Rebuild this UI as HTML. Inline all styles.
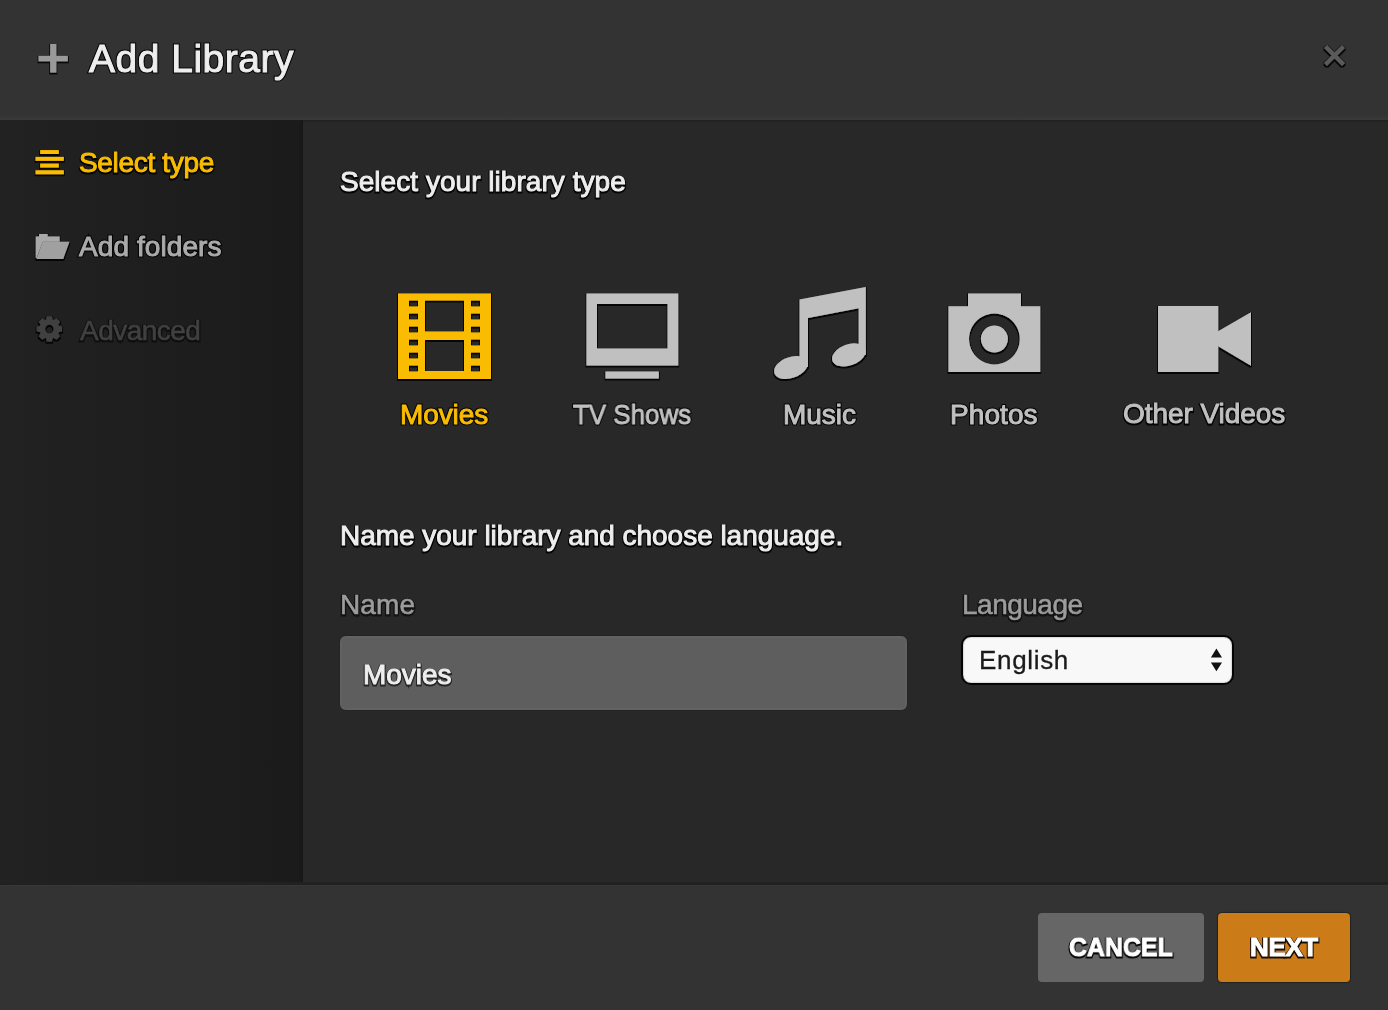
<!DOCTYPE html>
<html><head><meta charset="utf-8">
<style>
html,body{margin:0;padding:0;width:1388px;height:1010px;overflow:hidden;background:#282828;font-family:"Liberation Sans",sans-serif;}
.abs{position:absolute;}
#hdr{left:0;top:0;width:1388px;height:120px;background:#333;}
#hdrline{left:0;top:116px;width:1388px;height:4px;background:linear-gradient(#353535,#383838);}
#side{left:0;top:120px;width:303px;height:762px;background:linear-gradient(to right,#222 0%,#1e1e1e 50%,#1b1b1b 100%);}
#sideedge{left:299px;top:120px;width:4px;height:762px;background:linear-gradient(to right,#1a1a1a,#171717);}
#main{left:303px;top:120px;width:1085px;height:762px;background:#282828;}
#maintop{left:303px;top:120px;width:1085px;height:2px;background:#222;}
#band{left:0;top:882px;width:1388px;height:3px;background:#212121;}
#ftr{left:0;top:885px;width:1388px;height:125px;background:#333;border-top:1px solid #373737;}
.t{position:absolute;white-space:nowrap;line-height:1;-webkit-text-stroke:1px currentColor;will-change:transform;}
.sh{color:#000;-webkit-text-stroke:3.2px #000;filter:blur(0.6px);opacity:0.9}
.ns{-webkit-text-stroke:0.3px currentColor;}
</style></head>
<body>
<div id="hdr" class="abs"></div>
<div id="hdrline" class="abs"></div>
<div id="side" class="abs"></div>
<div id="sideedge" class="abs"></div>
<div id="main" class="abs"></div>
<div id="maintop" class="abs"></div>
<div id="band" class="abs"></div>
<div id="ftr" class="abs"></div>

<!-- input + select -->
<div class="abs" style="box-sizing:border-box;left:339.4px;top:635.2px;width:569px;height:75.8px;background:#5e5e5e;border:1.8px solid #232323;border-radius:7px;box-shadow:inset 0 0 1px 1.5px #646464"></div>
<div class="abs" style="left:961px;top:635px;width:269px;height:45.5px;background:#f8f8f8;border:2px solid #050505;border-radius:10px;box-shadow:inset 0 0 1.5px rgba(0,0,0,.6)"></div>

<!-- buttons -->
<div class="abs" style="left:1038px;top:913px;width:166px;height:69px;background:#666;border-radius:4px"></div>
<div class="abs" style="left:1218px;top:913px;width:132px;height:69px;background:#cc7b19;border-radius:4px;box-shadow:0 0 1px 1px rgba(0,0,0,.35)"></div>

<svg class="abs" style="left:0;top:0" width="1388" height="1010" viewBox="0 0 1388 1010">
 <defs>
  <filter id="sh" x="-20%" y="-20%" width="140%" height="140%">
   <feMorphology in="SourceAlpha" operator="dilate" radius="1.1" result="d"/>
   <feOffset in="d" dx="0" dy="0.5" result="o"/>
   <feFlood flood-color="#000" flood-opacity="0.85"/>
   <feComposite in2="o" operator="in" result="s"/>
   <feMerge><feMergeNode in="s"/><feMergeNode in="SourceGraphic"/></feMerge>
  </filter>
 </defs>
 <path filter="url(#sh)" fill="#f9bc00" fill-rule="evenodd" d="M398,293.5H491V379H398Z
  M409,300.5h9v6h-9Z M409,313.5h9v6h-9Z M409,326.5h9v6h-9Z M409,339.5h9v6h-9Z M409,352.5h9v6h-9Z M409,365.5h9v6h-9Z
  M471,300.5h9v6h-9Z M471,313.5h9v6h-9Z M471,326.5h9v6h-9Z M471,339.5h9v6h-9Z M471,352.5h9v6h-9Z M471,365.5h9v6h-9Z
  M425,300.5h39v31h-39Z M425,340h39v31h-39Z"/>
 <path filter="url(#sh)" fill="#c0c0c0" fill-rule="evenodd" d="M586.5,293.5H678.2V365.5H586.5Z M597,304H667.6V348.4H597Z M605.5,371.5H658.8V378.6H605.5Z"/>
 <g filter="url(#sh)" fill="#c0c0c0">
  <path d="M799.6,299.6L865.8,287.1V355H858.7V308.3L808,318V367H799.6Z"/>
  <ellipse cx="790.9" cy="367.5" rx="17.5" ry="10.5" transform="rotate(-20 790.9 367.5)"/>
  <ellipse cx="848.9" cy="354.9" rx="17.5" ry="10.5" transform="rotate(-20 848.9 354.9)"/>
 </g>
 <path filter="url(#sh)" fill="#c0c0c0" fill-rule="evenodd" d="M948.5,306.2H968V293.5H1021V306.2H1040.2V372H948.5Z
  M994.4,313.6a25.4,25.4 0 1,0 0.01,0Z M994.4,325.5a13.5,13.5 0 1,1 -0.01,0Z"/>
 <path filter="url(#sh)" fill="#c0c0c0" d="M1158,306H1218.2V331.2L1251,312.3V365.7L1218.2,346.3V372H1158Z"/>
 <g filter="url(#sh)" fill="#f9bc00">
  <rect x="40.2" y="150.1" width="18.6" height="3.9"/>
  <rect x="35.6" y="156.9" width="28.2" height="3.9"/>
  <rect x="40.2" y="163.6" width="18.6" height="3.9"/>
  <rect x="35.6" y="170.3" width="28.2" height="3.9"/>
 </g>
 <g filter="url(#sh)">
  <path fill="#a8a8a8" d="M35.8,258V236.6H39V233.9H47.6V236.6H59.6V241.7H42.7L36.5,258Z"/>
  <path fill="#a0a0a0" d="M42.7,241.7H69.4L63.2,258.9H36.5Z"/>
 </g>
 <path filter="url(#sh)" fill="#3f3f3f" fill-rule="evenodd" d="M46.04,319.79 L46.82,316.26 L51.98,316.26 L52.76,319.79 L53.53,320.11 L56.58,318.16 L60.24,321.82 L58.29,324.87 L58.61,325.64 L62.14,326.42 L62.14,331.58 L58.61,332.36 L58.29,333.13 L60.24,336.18 L56.58,339.84 L53.53,337.89 L52.76,338.21 L51.98,341.74 L46.82,341.74 L46.04,338.21 L45.27,337.89 L42.22,339.84 L38.56,336.18 L40.51,333.13 L40.19,332.36 L36.66,331.58 L36.66,326.42 L40.19,325.64 L40.51,324.87 L38.56,321.82 L42.22,318.16 L45.27,320.11Z M49.40,324.80 a4.2,4.2 0 1,0 0.01,0Z"/>
 <path filter="url(#sh)" d="M1325.5,46.5L1343.5,64.5M1343.5,46.5L1325.5,64.5" stroke="#5a5a5a" stroke-width="4.2"/>
 <g filter="url(#sh)" fill="#9a9a9a"><rect x="38.6" y="55.9" width="29.2" height="5.4"/><rect x="50.2" y="44" width="6.1" height="28.5"/></g>
 <path fill="#111" d="M1210.9,657.5L1216.4,648.6L1222,657.5Z M1210.9,662.4L1216.4,671.3L1222,662.4Z"/>
</svg>

<div class="t sh" style="left:89.0px;top:38.5px;font-size:39px;font-weight:400;letter-spacing:0.5px;margin-top:0.6px">Add Library</div><div class="t" style="left:89.0px;top:38.5px;font-size:39px;font-weight:400;letter-spacing:0.5px;color:#eeeeee">Add Library</div>
<div class="t sh" style="left:78.8px;top:149.4px;font-size:28px;font-weight:400;letter-spacing:-0.33px;margin-top:0.6px">Select type</div><div class="t" style="left:78.8px;top:149.4px;font-size:28px;font-weight:400;letter-spacing:-0.33px;color:#f9bc00">Select type</div>
<div class="t sh" style="left:79.2px;top:232.7px;font-size:28px;font-weight:400;letter-spacing:0.08px;margin-top:0.6px">Add folders</div><div class="t" style="left:79.2px;top:232.7px;font-size:28px;font-weight:400;letter-spacing:0.08px;color:#aaaaaa">Add folders</div>
<div class="t sh" style="left:79.8px;top:317.3px;font-size:28px;font-weight:400;letter-spacing:-0.53px;opacity:0.5;margin-top:0.6px">Advanced</div><div class="t" style="left:79.8px;top:317.3px;font-size:28px;font-weight:400;letter-spacing:-0.53px;-webkit-text-stroke:0.6px currentColor;color:#404040">Advanced</div>
<div class="t sh" style="left:340.0px;top:168.2px;font-size:28px;font-weight:400;letter-spacing:0.04px;margin-top:0.6px">Select your library type</div><div class="t" style="left:340.0px;top:168.2px;font-size:28px;font-weight:400;letter-spacing:0.04px;color:#eeeeee">Select your library type</div>
<div class="t sh" style="left:399.5px;top:400.5px;font-size:28px;font-weight:400;letter-spacing:-0.1px;margin-top:0.6px">Movies</div><div class="t" style="left:399.5px;top:400.5px;font-size:28px;font-weight:400;letter-spacing:-0.1px;color:#f9bc00">Movies</div>
<div class="t sh" style="left:573.3px;top:400.5px;font-size:28px;font-weight:400;letter-spacing:0.0px;transform:scaleX(0.926);transform-origin:0 0;margin-top:0.6px">TV Shows</div><div class="t" style="left:573.3px;top:400.5px;font-size:28px;font-weight:400;letter-spacing:0.0px;transform:scaleX(0.926);transform-origin:0 0;color:#c0c0c0">TV Shows</div>
<div class="t sh" style="left:783.0px;top:400.5px;font-size:28px;font-weight:400;letter-spacing:-0.05px;margin-top:0.6px">Music</div><div class="t" style="left:783.0px;top:400.5px;font-size:28px;font-weight:400;letter-spacing:-0.05px;color:#c0c0c0">Music</div>
<div class="t sh" style="left:950.0px;top:400.5px;font-size:28px;font-weight:400;letter-spacing:0.08px;margin-top:0.6px">Photos</div><div class="t" style="left:950.0px;top:400.5px;font-size:28px;font-weight:400;letter-spacing:0.08px;color:#c0c0c0">Photos</div>
<div class="t sh" style="left:1122.7px;top:400.3px;font-size:28px;font-weight:400;letter-spacing:-0.06px;margin-top:0.6px">Other Videos</div><div class="t" style="left:1122.7px;top:400.3px;font-size:28px;font-weight:400;letter-spacing:-0.06px;color:#c0c0c0">Other Videos</div>
<div class="t sh" style="left:340.0px;top:522.0px;font-size:28px;font-weight:400;letter-spacing:-0.03px;margin-top:0.6px">Name your library and choose language.</div><div class="t" style="left:340.0px;top:522.0px;font-size:28px;font-weight:400;letter-spacing:-0.03px;color:#eeeeee">Name your library and choose language.</div>
<div class="t sh" style="left:340.4px;top:591.4px;font-size:28px;font-weight:400;letter-spacing:0.1px;opacity:0.55;margin-top:0.6px">Name</div><div class="t" style="left:340.4px;top:591.4px;font-size:28px;font-weight:400;letter-spacing:0.1px;-webkit-text-stroke:0.6px currentColor;color:#9c9c9c">Name</div>
<div class="t sh" style="left:962.0px;top:591.0px;font-size:28px;font-weight:400;letter-spacing:-0.5px;opacity:0.55;margin-top:0.6px">Language</div><div class="t" style="left:962.0px;top:591.0px;font-size:28px;font-weight:400;letter-spacing:-0.5px;-webkit-text-stroke:0.6px currentColor;color:#9c9c9c">Language</div>
<div class="t sh" style="left:362.8px;top:661.2px;font-size:28px;font-weight:400;letter-spacing:-0.02px;opacity:0.6;margin-top:0.6px">Movies</div><div class="t" style="left:362.8px;top:661.2px;font-size:28px;font-weight:400;letter-spacing:-0.02px;color:#eeeeee">Movies</div>
<div class="t ns" style="left:979.0px;top:647.0px;font-size:26px;font-weight:400;letter-spacing:0.67px;color:#1a1a1a">English</div>
<div class="t sh" style="left:1068.5px;top:934.0px;font-size:26px;font-weight:700;letter-spacing:0.0px;transform:scaleX(0.9583);transform-origin:0 0;margin-top:0.6px">CANCEL</div><div class="t" style="left:1068.5px;top:934.0px;font-size:26px;font-weight:700;letter-spacing:0.0px;transform:scaleX(0.9583);transform-origin:0 0;color:#ffffff">CANCEL</div>
<div class="t sh" style="left:1249.8px;top:934.0px;font-size:26px;font-weight:700;letter-spacing:-0.37px;margin-top:0.6px">NEXT</div><div class="t" style="left:1249.8px;top:934.0px;font-size:26px;font-weight:700;letter-spacing:-0.37px;color:#ffffff">NEXT</div>
</body></html>
